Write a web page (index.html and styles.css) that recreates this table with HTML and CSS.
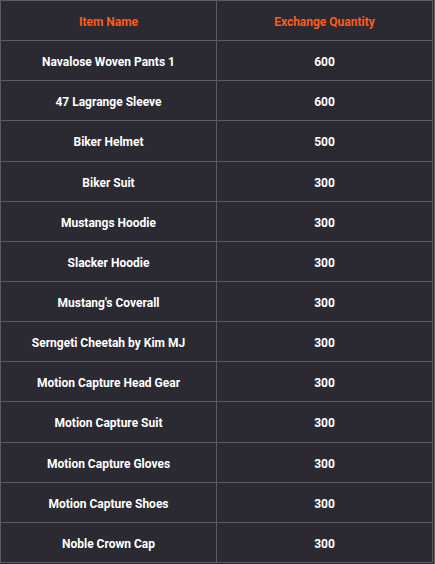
FILE: index.html
```html
<!DOCTYPE html>
<html>
<head>
<meta charset="utf-8">
<link rel="stylesheet" href="styles.css">
</head>
<body>
<div class="frame">
<table class="exchange">
  <tbody>
    <tr><th>Item Name</th><th>Exchange Quantity</th></tr>
    <tr><td>Navalose Woven Pants 1</td><td>600</td></tr>
    <tr><td>47 Lagrange Sleeve</td><td>600</td></tr>
    <tr><td>Biker Helmet</td><td>500</td></tr>
    <tr><td>Biker Suit</td><td>300</td></tr>
    <tr><td>Mustangs Hoodie</td><td>300</td></tr>
    <tr><td>Slacker Hoodie</td><td>300</td></tr>
    <tr><td>Mustang's Coverall</td><td>300</td></tr>
    <tr><td>Serngeti Cheetah by Kim MJ</td><td>300</td></tr>
    <tr><td>Motion Capture Head Gear</td><td>300</td></tr>
    <tr><td>Motion Capture Suit</td><td>300</td></tr>
    <tr><td>Motion Capture Gloves</td><td>300</td></tr>
    <tr><td>Motion Capture Shoes</td><td>300</td></tr>
    <tr><td>Noble Crown Cap</td><td>300</td></tr>
  </tbody>
</table>
</div>
</body>
</html>
```
FILE: styles.css
```css
html, body {
  margin: 0;
  padding: 0;
  background: #2b2a32;
}
.frame {
  width: 434px;
  height: 564px;
  border-right: 1px solid #6a6a6a;
  box-sizing: content-box;
  overflow: hidden;
}
.exchange {
  border-collapse: collapse;
  width: 433px;
  height: 563px;
  table-layout: fixed;
  font-family: Roboto, "Liberation Sans", sans-serif;
  font-size: 12px;
  font-weight: 700;
  color: #ffffff;
  background: #2b2a32;
}
.exchange tr {
  height: 40px;
}
.exchange th,
.exchange td {
  border: 1px solid #5c5c60;
  text-align: center;
  vertical-align: middle;
  padding: 3px 0 0;
}
.exchange th {
  color: #ff5a19;
}
.exchange th:first-child,
.exchange td:first-child {
  width: 215px;
}
```
